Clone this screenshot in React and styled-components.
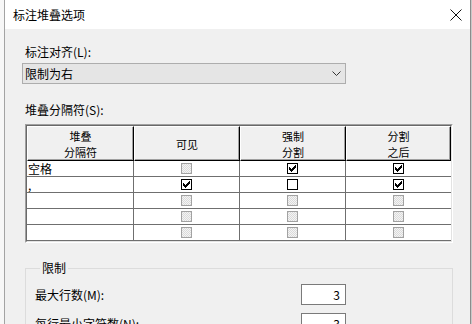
import React from 'react';
import styled, { createGlobalStyle } from 'styled-components';

const GlobalStyle = createGlobalStyle`
  html, body {
    margin: 0;
    padding: 0;
    width: 472px;
    height: 324px;
    overflow: hidden;
    background: #f6f6f6;
  }
  body {
    font-family: "Noto Sans CJK SC", "Noto Sans", sans-serif;
    font-size: 12px;
    color: #000;
  }
`

const Screen = styled.div`
  display: flex;
  width: 472px;
  height: 324px;
`
const Strip = styled.div`
  flex: 0 0 ${p => p.w}px;
  background: ${p => p.bg};
`
const Dialog = styled.div`
  flex: 0 0 467px;
  box-sizing: border-box;
  border-left: 1px solid #a3a3a3;
  border-right: 1px solid #8c8c8c;
  background: #f0f0f0;
  display: flex;
  flex-direction: column;
`
const TitleBar = styled.div`
  height: 29px;
  background: #fff;
  display: flex;
  align-items: center;
  justify-content: space-between;
  padding-left: 8px;
  line-height: 16px;
`
const CloseBtn = styled.div`
  width: 29px;
  height: 29px;
  display: flex;
  align-items: center;
  justify-content: center;
`
const Body = styled.div`
  padding: 15px 0 0 17px;
  display: flex;
  flex-direction: column;
`
const Label = styled.div`
  padding-left: 3px;
  line-height: 16px;
  height: 16px;
  margin-top: ${p => p.mt || 0}px;
`
const Combo = styled.div`
  margin-top: 3px;
  width: 324px;
  height: 21px;
  box-sizing: border-box;
  border: 1px solid #adadad;
  background: #e5e5e5;
  display: flex;
  align-items: center;
  justify-content: space-between;
  padding-left: 2px;
  line-height: 16px;
`
const Arrow = styled.div`
  width: 17px;
  display: flex;
  justify-content: center;
`
const GridOuter = styled.div`
  margin: 6px 0 0 3px;
  width: 428px;
  box-sizing: border-box;
  border-top: 1px solid #a0a0a0;
  border-left: 1px solid #a0a0a0;
  border-right: 1px solid #fff;
  border-bottom: 1px solid #fff;
`
const GridInner = styled.div`
  border-top: 1px solid #696969;
  border-left: 1px solid #696969;
  border-right: 1px solid #e3e3e3;
  border-bottom: 1px solid #e3e3e3;
  background: #fff;
`
const Row = styled.div`
  display: grid;
  grid-template-columns: 107px 106px 106px 105px;
`
const HeadCell = styled.div`
  height: 35px;
  box-sizing: border-box;
  background: #f0f0f0;
  border-top: 1px solid #fff;
  border-left: 1px solid #fff;
  border-right: 1px solid #000;
  border-bottom: 1px solid #000;
  box-shadow: inset -1px -1px 0 #a0a0a0;
  display: flex;
  flex-direction: column;
  align-items: center;
  justify-content: center;
  text-align: center;
  font-size: 11px;
`
const HeadLine = styled.div`
  height: 16px;
  line-height: 16px;
`
const Cell = styled.div`
  height: 16px;
  box-sizing: border-box;
  border-bottom: 1px solid #6f6f6f;
  border-right: ${p => (p.last ? 'none' : '1px solid #6f6f6f')};
  display: flex;
  align-items: center;
  justify-content: ${p => (p.text ? 'flex-start' : 'center')};
  padding-left: ${p => (p.text ? '1px' : '0')};
  line-height: 15px;
`
const Box = styled.div`
  width: 11px;
  height: 11px;
  box-sizing: border-box;
  border: 1px solid ${p => (p.off ? '#a2a2a2' : '#000')};
  background: ${p => (p.off
    ? 'repeating-conic-gradient(#f4f4f4 0 25%, #dadada 0 50%) 0 0 / 2px 2px'
    : '#fff')};
  display: flex;
  align-items: center;
  justify-content: center;
`
const Group = styled.fieldset`
  margin: 17px 0 0 3px;
  width: 428px;
  box-sizing: border-box;
  border: 1px solid #dcdcdc;
  padding: 8px 10px 0 9px;
  min-width: 0;
`
const Legend = styled.legend`
  margin-left: 5px;
  padding: 0 2px;
  line-height: 16px;
`
const FieldRow = styled.div`
  display: grid;
  grid-template-columns: 266px 45px;
  align-items: center;
  margin-bottom: 8px;
  line-height: 16px;
`
const NumBox = styled.div`
  height: 21px;
  box-sizing: border-box;
  border: 1px solid #7a7a7a;
  background: #fff;
  text-align: right;
  padding-right: 5px;
  line-height: 19px;
`

const CHECK = [
  '......x',
  '.....xx',
  'x...xxx',
  'xx.xxx.',
  'xxxxx..',
  '.xxx...',
  '..x....',
];

const CheckMark = () => (
  <svg width="7" height="7" viewBox="0 0 7 7" shapeRendering="crispEdges">
    {CHECK.flatMap((line, y) =>
      line.split('').map((c, x) =>
        c === 'x' ? <rect key={`${x}-${y}`} x={x} y={y} width="1" height="1" fill="#000" /> : null
      )
    )}
  </svg>
);

const CheckBox = ({ state }) => (
  <Box off={state === 'off'}>
    {state === 'on' && <CheckMark />}
  </Box>
);

const HEADS = [['堆叠', '分隔符'], ['可见'], ['强制', '分割'], ['分割', '之后']];

const ROWS = [
  { name: '空格', v: 'off', f: 'on', a: 'on' },
  { name: ',', v: 'on', f: 'empty', a: 'on' },
  { name: '', v: 'off', f: 'off', a: 'off' },
  { name: '', v: 'off', f: 'off', a: 'off' },
  { name: '', v: 'off', f: 'off', a: 'off' },
];

export default function App() {
  return (
    <>
      <GlobalStyle />
      <Screen>
        <Strip w={4} bg="#f7f7f7" />
        <Dialog>
          <TitleBar>
            <span>标注堆叠选项</span>
            <CloseBtn>
              <svg width="12" height="12" viewBox="0 0 12 12">
                <path d="M0.5 0.5 L11.5 11.5 M11.5 0.5 L0.5 11.5" stroke="#111" strokeWidth="1" fill="none" />
              </svg>
            </CloseBtn>
          </TitleBar>
          <Body>
            <Label>标注对齐(L):</Label>
            <Combo>
              <span>限制为右</span>
              <Arrow>
                <svg width="9" height="5" viewBox="0 0 9 5">
                  <path d="M0.5 0.5 L4.5 4.5 L8.5 0.5" stroke="#333" strokeWidth="1" fill="none" />
                </svg>
              </Arrow>
            </Combo>
            <Label mt={18}>堆叠分隔符(S):</Label>
            <GridOuter>
              <GridInner>
                <Row>
                  {HEADS.map((lines, i) => (
                    <HeadCell key={i}>
                      {lines.map(t => <HeadLine key={t}>{t}</HeadLine>)}
                    </HeadCell>
                  ))}
                </Row>
                {ROWS.map((r, i) => (
                  <Row key={i}>
                    <Cell text>{r.name}</Cell>
                    <Cell><CheckBox state={r.v} /></Cell>
                    <Cell><CheckBox state={r.f} /></Cell>
                    <Cell last><CheckBox state={r.a} /></Cell>
                  </Row>
                ))}
              </GridInner>
            </GridOuter>
            <Group>
              <Legend>限制</Legend>
              <FieldRow>
                <span>最大行数(M):</span>
                <NumBox>3</NumBox>
              </FieldRow>
              <FieldRow>
                <span>每行最小字符数(N):</span>
                <NumBox>3</NumBox>
              </FieldRow>
            </Group>
          </Body>
        </Dialog>
        <Strip w={1} bg="#c8c8c8" />
      </Screen>
    </>
  );
}
